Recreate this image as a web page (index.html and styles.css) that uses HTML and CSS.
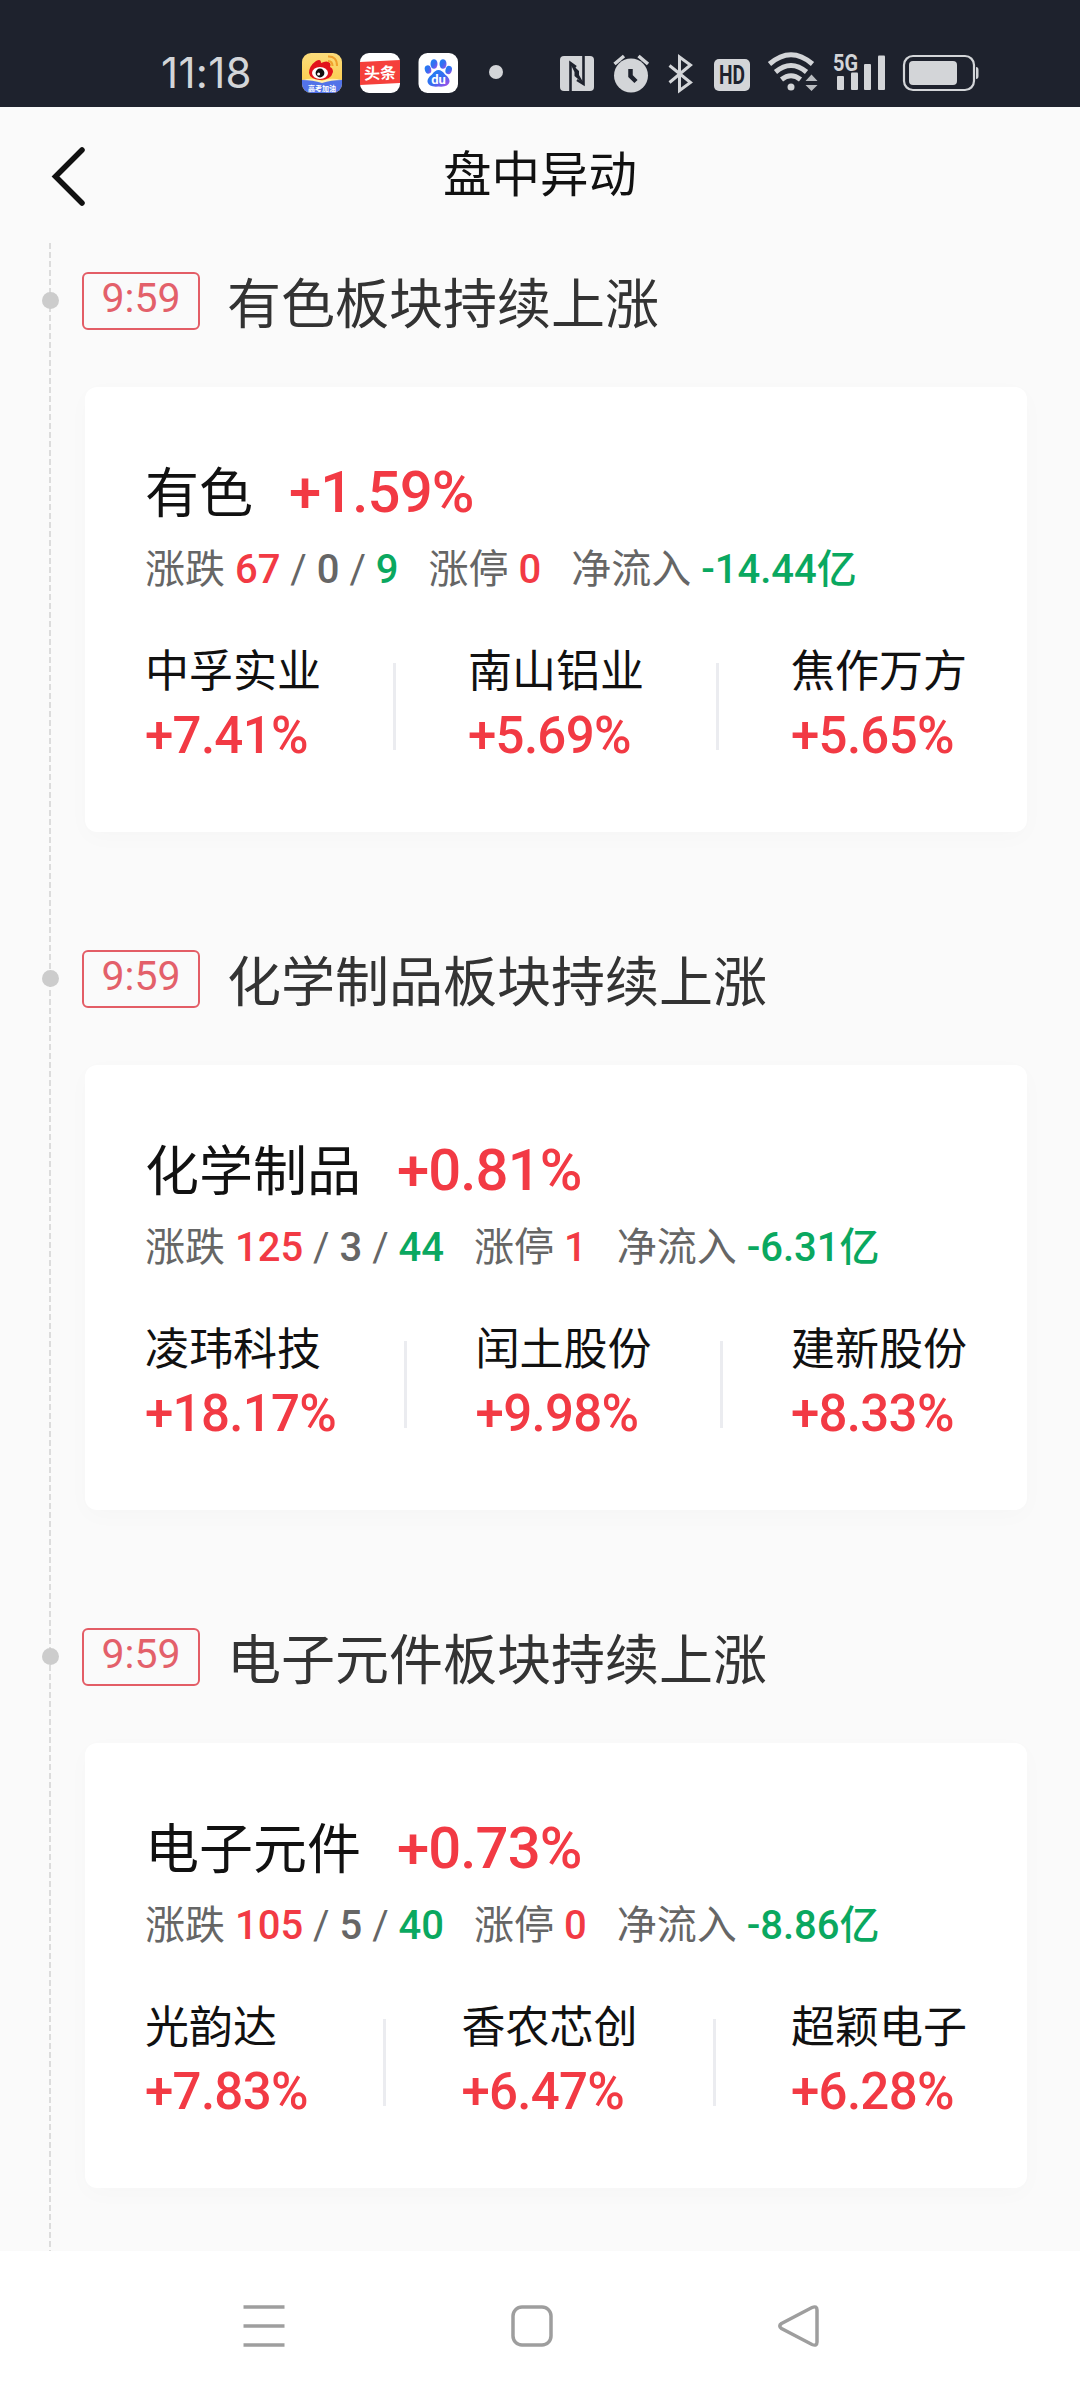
FILE: index.html
```html
<!DOCTYPE html>
<html lang="zh-CN">
<head>
  <meta charset="UTF-8" />
  <title>盘中异动</title>
  <link rel="stylesheet" href="styles.css">
</head>
<body>
  <div class="status-bar">
    <span class="clock">11:18</span>
    <svg class="status-icons" width="700" height="60" viewBox="300 42 700 60">
      <defs>
        <linearGradient id="paw" x1="0" y1="0" x2="1" y2="1">
          <stop offset="0" stop-color="#1684f5" />
          <stop offset="0.55" stop-color="#3a6cf0" />
          <stop offset="1" stop-color="#b04be8" />
        </linearGradient>
        <linearGradient id="sun" x1="0" y1="0" x2="0" y2="1">
          <stop offset="0" stop-color="#fbdc7c" />
          <stop offset="1" stop-color="#fdc93f" />
        </linearGradient>
        <clipPath id="weiboClip"><rect x="302" y="53" width="40" height="40" rx="9" /></clipPath>
      </defs>

      <!-- weibo -->
      <g clip-path="url(#weiboClip)">
        <rect x="302" y="53" width="40" height="40" fill="url(#sun)" />
        <path d="M302 80 Q313 78 322 82 Q331 78 342 80 V93 H302Z" fill="#5273e8" />
        <path d="M302 80 Q314 77 322 81 Q330 77 342 80 Q331 80 322 83 Q313 80 302 80Z" fill="#fff0b0" />
        <path d="M309 73 Q309 66 316 61 Q321 58 321 63 Q327 60 330 63 Q331 65 330 67 Q333 68 333 72 Q331 80 320 80 Q310 79 309 73Z" fill="#e2131c" />
        <ellipse cx="320" cy="73" rx="8" ry="6" fill="#fff" />
        <circle cx="320" cy="73" r="4.4" fill="#111" />
        <circle cx="318.600" cy="74" r="1.500" fill="#fff" />
        <path d="M328 56.500 Q337 56 337 66 M328 61 Q332.500 61 332.500 66" fill="none" stroke="#f0a02c" stroke-width="2" />
        <text x="322" y="90.500" class="app-tiny">高考加油</text>
      </g>

      <!-- toutiao -->
      <rect x="360" y="53" width="40" height="40" rx="9" fill="#fff" />
      <path d="M360 62 L400 60 V83 L360 85Z" fill="#f5403b" />
      <text x="380" y="79" class="app-toutiao" transform="rotate(-2 380 73)">头条</text>

      <!-- baidu -->
      <rect x="418.500" y="53" width="39.500" height="40" rx="9" fill="#fff" />
      <g fill="url(#paw)">
        <ellipse cx="428" cy="69.500" rx="3.200" ry="4.200" transform="rotate(-15 428 69.500)" />
        <ellipse cx="434" cy="64" rx="3.500" ry="4.800" />
        <ellipse cx="443" cy="64" rx="3.500" ry="4.800" />
        <ellipse cx="448.700" cy="70" rx="3.200" ry="4.200" transform="rotate(15 448.700 70)" />
        <path d="M438.500 70 Q442 70 445 74.500 Q450 78 449.500 82 Q448 87.500 438.500 86.500 Q429 87.500 427.500 82 Q427 78 432 74.500 Q435 70 438.500 70Z" />
      </g>
      <text x="438.500" y="83.500" class="app-du">du</text>

      <circle cx="496" cy="72" r="7" fill="#d3d5d8" />

      <!-- nfc -->
      <rect x="560" y="56" width="34" height="35" rx="4" fill="#d3d5d8" />
      <path d="M570.500 91 V76 M570.500 76 V63 L576 67 M583.500 56 V84 L577 80" fill="none" stroke="#1e222d" stroke-width="2.600" />
      <path d="M569.500 62 L579 71 V75 L584.500 84.500 L574.500 76 V72Z" fill="#1e222d" />

      <!-- alarm -->
      <circle cx="631" cy="75.500" r="17" fill="#d3d5d8" />
      <path d="M614.500 64 L624 56 M648 64 L638.500 56" stroke="#d3d5d8" stroke-width="3.500" />
      <path d="M630.500 69 V76 L636 81.500" fill="none" stroke="#1e222d" stroke-width="4.500" />

      <!-- bluetooth -->
      <path d="M669.500 65.500 L690.500 82.500 L679.500 90.500 V57 L690.500 65 L669.500 82.500" fill="none" stroke="#d3d5d8" stroke-width="3" />

      <!-- hd -->
      <rect x="714" y="59" width="36" height="32" rx="5" fill="#d3d5d8" />
      <text x="732" y="84" class="hd" textLength="26" lengthAdjust="spacingAndGlyphs">HD</text>

      <!-- wifi -->
      <g fill="none" stroke="#d3d5d8" stroke-width="5">
        <path d="M769.500 64 Q791 45.500 812.500 64" />
        <path d="M775.500 72 Q791 59 806.500 72" />
        <path d="M781.500 79.500 Q791 72 800.500 79.500" />
      </g>
      <circle cx="791" cy="87" r="3.500" fill="#d3d5d8" />
      <path d="M805.500 81 L811.500 74.500 L817.500 81Z M805.500 85 H817.500 L811.500 91Z" fill="#b9bcc0" />

      <!-- signal -->
      <text x="833" y="70.500" class="net" textLength="25" lengthAdjust="spacingAndGlyphs">5G</text>
      <g fill="#d3d5d8">
        <rect x="837" y="76" width="7" height="14" rx="1" />
        <rect x="851" y="72.500" width="7" height="17.500" rx="1" />
        <rect x="864" y="64" width="7" height="26" rx="1" />
        <rect x="878" y="55.500" width="7" height="34.500" rx="1" />
      </g>

      <!-- battery -->
      <rect x="904" y="56" width="70" height="34" rx="9" fill="none" stroke="#d3d5d8" stroke-width="2.200" />
      <rect x="909" y="61" width="48" height="24" rx="4" fill="#d3d5d8" />
      <path d="M976 67 Q978.500 67 978.500 70 V76 Q978.500 79 976 79Z" fill="#d3d5d8" />
    </svg>
  </div>

  <header class="header">
    <svg class="back" width="40" height="64" viewBox="0 0 40 64">
      <path d="M34 6 L7.500 32.500 L34 59" />
    </svg>
    <h1>盘中异动</h1>
  </header>

  <main class="timeline">
    <section class="event">
      <div class="event-head">
        <span class="dot"></span>
        <span class="time">9:59</span>
        <h2>有色板块持续上涨</h2>
      </div>
      <div class="card">
        <div class="sector"><span>有色</span><b class="up">+1.59%</b></div>
        <div class="stats">
          <span>涨跌 <b class="up">67</b> / <b>0</b> / <b class="down">9</b></span>
          <span>涨停 <b class="up">0</b></span>
          <span>净流入 <b class="down">-14.44亿</b></span>
        </div>
        <div class="stocks">
          <div class="stock"><span>中孚实业</span><b>+7.41%</b></div>
          <i class="divider"></i>
          <div class="stock"><span>南山铝业</span><b>+5.69%</b></div>
          <i class="divider"></i>
          <div class="stock"><span>焦作万方</span><b>+5.65%</b></div>
        </div>
      </div>
    </section>

    <section class="event">
      <div class="event-head">
        <span class="dot"></span>
        <span class="time">9:59</span>
        <h2>化学制品板块持续上涨</h2>
      </div>
      <div class="card">
        <div class="sector"><span>化学制品</span><b class="up">+0.81%</b></div>
        <div class="stats">
          <span>涨跌 <b class="up">125</b> / <b>3</b> / <b class="down">44</b></span>
          <span>涨停 <b class="up">1</b></span>
          <span>净流入 <b class="down">-6.31亿</b></span>
        </div>
        <div class="stocks">
          <div class="stock"><span>凌玮科技</span><b>+18.17%</b></div>
          <i class="divider"></i>
          <div class="stock"><span>闰土股份</span><b>+9.98%</b></div>
          <i class="divider"></i>
          <div class="stock"><span>建新股份</span><b>+8.33%</b></div>
        </div>
      </div>
    </section>

    <section class="event">
      <div class="event-head">
        <span class="dot"></span>
        <span class="time">9:59</span>
        <h2>电子元件板块持续上涨</h2>
      </div>
      <div class="card">
        <div class="sector"><span>电子元件</span><b class="up">+0.73%</b></div>
        <div class="stats">
          <span>涨跌 <b class="up">105</b> / <b>5</b> / <b class="down">40</b></span>
          <span>涨停 <b class="up">0</b></span>
          <span>净流入 <b class="down">-8.86亿</b></span>
        </div>
        <div class="stocks">
          <div class="stock"><span>光韵达</span><b>+7.83%</b></div>
          <i class="divider"></i>
          <div class="stock"><span>香农芯创</span><b>+6.47%</b></div>
          <i class="divider"></i>
          <div class="stock"><span>超颖电子</span><b>+6.28%</b></div>
        </div>
      </div>
    </section>
  </main>

  <nav class="nav-bar">
    <svg width="42" height="42" viewBox="0 0 42 42">
      <path d="M0.500 2 H41.500 M0.500 21 H41.500 M0.500 40 H41.500" />
    </svg>
    <svg width="42" height="42" viewBox="0 0 42 42">
      <rect x="2" y="2" width="38" height="38" rx="9" />
    </svg>
    <svg width="42" height="42" viewBox="0 0 42 42">
      <path d="M3.500 18.500 L34 2.500 Q39 0.500 39 5 V37 Q39 41.500 34 39.500 L3.500 23.500 Q0 21 3.500 18.500Z" />
    </svg>
  </nav>
</body>
</html>
```
FILE: styles.css
```css
* {
  box-sizing: border-box;
}

body {
  margin: 0;
  width: 1080px;
  height: 2400px;
  overflow: hidden;
  display: flex;
  flex-direction: column;
  font-family: Roboto, "Noto Sans CJK SC", sans-serif;
  background: #fafafa;
  color: #111;
}

h1, h2 {
  margin: 0;
  font-weight: 400;
}

b {
  font-weight: 500;
}

.status-bar {
  height: 107px;
  flex: none;
  padding: 43px 0 0 161px;
  display: flex;
  background: #1e222d;
}

.clock {
  width: 139px;
  font-family: Inter, sans-serif;
  font-size: 42px;
  line-height: 60px;
  letter-spacing: 0.3px;
  color: #d3d5d8;
}

.status-icons {
  margin-top: -1px;
}

.app-tiny {
  font-size: 7px;
  font-weight: 700;
  text-anchor: middle;
  fill: #fff;
}

.app-toutiao {
  font-size: 16px;
  font-weight: 700;
  text-anchor: middle;
  fill: #fff;
}

.app-du {
  font-size: 13px;
  font-weight: 700;
  text-anchor: middle;
  fill: #fff;
}

.hd {
  font-size: 25px;
  font-weight: 700;
  text-anchor: middle;
  fill: #1e222d;
}

.net {
  font-size: 24px;
  font-weight: 700;
  fill: #d3d5d8;
}

.header {
  height: 136px;
  flex: none;
  padding: 1px 48px 0;
  display: grid;
  grid-template-columns: 40px 1fr 40px;
  align-items: center;
}

.back {
  fill: none;
  stroke: #111;
  stroke-width: 5.5;
  stroke-linecap: round;
}

.header h1 {
  font-size: 48.5px;
  line-height: 60px;
  text-align: center;
}

.timeline {
  height: 2008px;
  flex: none;
  overflow: hidden;
  background: repeating-linear-gradient(to bottom, #dcdcdc 0 6px, transparent 6px 9px) 49px 0 / 2px 100% no-repeat;
}

.event {
  height: 678px;
  padding: 0 53px 0 42px;
}

.event-head {
  height: 144px;
  padding-top: 29px;
  display: flex;
  align-items: flex-start;
}

.dot {
  width: 17px;
  height: 17px;
  margin-top: 20px;
  border-radius: 50%;
  background: #ccc;
}

.time {
  width: 118px;
  height: 58px;
  margin: 0 27px 0 23px;
  border: 2px solid #e35d66;
  border-radius: 6px;
  font-size: 41px;
  line-height: 48px;
  text-align: center;
  color: #e3606a;
}

.event-head h2 {
  font-size: 54px;
  line-height: 68px;
  color: #333;
}

.card {
  height: 445px;
  margin-left: 43px;
  padding: 71px 60px 0;
  border-radius: 12px;
  background: #fff;
  box-shadow: 0 6px 24px rgba(0, 0, 0, 0.02);
}

.sector {
  display: flex;
  align-items: baseline;
  gap: 36px;
  font-size: 54px;
  line-height: 68px;
}

.sector span {
  position: relative;
  top: 1px;
}

.sector b {
  font-size: 58px;
  letter-spacing: -0.9px;
}

.stats {
  margin-top: 22px;
  display: flex;
  gap: 30px;
  font-size: 40px;
  line-height: 40px;
  color: #666;
  white-space: nowrap;
}

.up {
  color: #f23a44;
}

.down {
  color: #0aa860;
}

.stocks {
  margin-top: 56px;
  display: flex;
  justify-content: space-between;
  align-items: center;
}

.stock {
  display: flex;
  flex-direction: column;
  font-size: 44px;
  line-height: 52px;
}

.stock b {
  margin-top: 8px;
  font-size: 51px;
  line-height: 60px;
  letter-spacing: -0.7px;
  color: #f23a44;
}

.divider {
  width: 3px;
  height: 87px;
  background: #ebecf0;
}

.nav-bar {
  flex: 1;
  padding: 54px 260px 0 243px;
  display: flex;
  justify-content: space-between;
  background: #fff;
}

.nav-bar svg {
  fill: none;
  stroke: #9e9e9e;
  stroke-width: 3.5;
}
```
